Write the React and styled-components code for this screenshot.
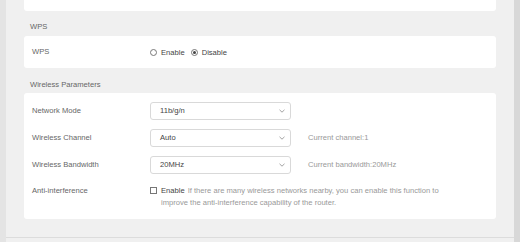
import React from "react";
import styled, { createGlobalStyle } from "styled-components";

const Global = createGlobalStyle`
  html, body { margin: 0; padding: 0; }
  body {
    background: #e4e4e4;
    font-family: "Liberation Sans", Arial, sans-serif;
    font-size: 7.6px;
    color: #666;
  }
`;

const Shell = styled.div`
  display: flex;
  width: 520px;
  height: 242px;
  overflow: hidden;
`;

const Rail = styled.div`
  width: 6px;
  flex: none;
  background: ${(p) => (p.$right ? "#d8d8d8" : "#e4e4e4")};
`;

const Main = styled.div`
  flex: 1;
  display: flex;
  flex-direction: column;
  background: #f0f0f0;
`;

const Panel = styled.div`
  height: 238px;
  box-sizing: border-box;
  padding: 0 18px;
  border-bottom: 1px solid #dcdcdc;
  display: flex;
  flex-direction: column;
`;

const Card = styled.div`
  background: #fff;
  border-radius: ${(p) => (p.$cut ? "0 0 3px 3px" : "3px")};
  box-sizing: border-box;
  height: ${(p) => p.$h}px;
  padding: ${(p) => p.$pad || "0"};
  display: flex;
  flex-direction: column;
  justify-content: ${(p) => (p.$center ? "center" : "flex-start")};
`;

const SectionTitle = styled.div`
  padding: ${(p) => p.$top}px 6px 0;
  height: 25px;
  box-sizing: border-box;
  line-height: 10px;
  color: #666;
`;

const Row = styled.div`
  display: flex;
  align-items: ${(p) => (p.$top ? "flex-start" : "center")};
  height: ${(p) => (p.$h ? `${p.$h}px` : "auto")};
  padding: ${(p) => (p.$top ? "7px 0 0" : "0")};
  box-sizing: border-box;
`;

const Label = styled.div`
  width: 118px;
  flex: none;
  padding-left: 8px;
  color: #666;
  line-height: 12px;
`;

const Controls = styled.div`
  display: flex;
  align-items: ${(p) => (p.$top ? "flex-start" : "center")};
  color: #444;
`;

const RadioDot = styled.span`
  width: 7px;
  height: 7px;
  box-sizing: border-box;
  border: 1px solid #777;
  border-radius: 50%;
  display: inline-flex;
  align-items: center;
  justify-content: center;
  margin-right: 4px;
  &::after {
    content: "";
    width: 3px;
    height: 3px;
    border-radius: 50%;
    background: ${(p) => (p.$on ? "#444" : "transparent")};
  }
`;

const Option = styled.label`
  display: flex;
  align-items: center;
  margin-right: 6px;
  color: #444;
`;

const SelectBox = styled.div`
  width: 141px;
  height: 18px;
  box-sizing: border-box;
  border: 1px solid #d9d9d9;
  border-radius: 3px;
  display: flex;
  align-items: center;
  justify-content: space-between;
  padding: 0 5px 0 9px;
  color: #444;
`;

const Hint = styled.span`
  margin-left: 17px;
  color: #999;
`;

const CheckBox = styled.span`
  width: 7px;
  height: 7px;
  flex: none;
  box-sizing: border-box;
  border: 1px solid #777;
  margin: 2px 4px 0 0;
`;

const Para = styled.div`
  width: 290px;
  line-height: 12px;
  color: #444;
`;

const Line = styled.div`
  white-space: nowrap;
`;

const EnableText = styled.span`
  color: #444;
  margin-right: 3px;
`;

const Help = styled.span`
  color: #999;
`;

const Chevron = () => (
  <svg width="6" height="4" viewBox="0 0 6 4">
    <path d="M0.5 0.8 L3 3.2 L5.5 0.8" fill="none" stroke="#999" strokeWidth="0.9" />
  </svg>
);

const Select = ({ value }) => (
  <SelectBox>
    <span>{value}</span>
    <Chevron />
  </SelectBox>
);

export default function App() {
  return (
    <>
      <Global />
      <Shell>
        <Rail />
        <Main>
          <Panel>
            <Card $h={11} $cut />
            <SectionTitle $top={11}>WPS</SectionTitle>
            <Card $h={32} $center>
              <Row>
                <Label>WPS</Label>
                <Controls>
                  <Option><RadioDot />Enable</Option>
                  <Option><RadioDot $on />Disable</Option>
                </Controls>
              </Row>
            </Card>
            <SectionTitle $top={12}>Wireless Parameters</SectionTitle>
            <Card $h={126} $pad="4px 0 0">
              <Row $h={27}>
                <Label>Network Mode</Label>
                <Controls><Select value="11b/g/n" /></Controls>
              </Row>
              <Row $h={27}>
                <Label>Wireless Channel</Label>
                <Controls>
                  <Select value="Auto" />
                  <Hint>Current channel:1</Hint>
                </Controls>
              </Row>
              <Row $h={27}>
                <Label>Wireless Bandwidth</Label>
                <Controls>
                  <Select value="20MHz" />
                  <Hint>Current bandwidth:20MHz</Hint>
                </Controls>
              </Row>
              <Row $top>
                <Label>Anti-interference</Label>
                <Controls $top>
                  <CheckBox />
                  <Para>
                    <Line>
                      <EnableText>Enable</EnableText>
                      <Help>If there are many wireless networks nearby, you can enable this function to</Help>
                    </Line>
                    <Line>
                      <Help>improve the anti-interference capability of the router.</Help>
                    </Line>
                  </Para>
                </Controls>
              </Row>
            </Card>
          </Panel>
        </Main>
        <Rail $right />
      </Shell>
    </>
  );
}
